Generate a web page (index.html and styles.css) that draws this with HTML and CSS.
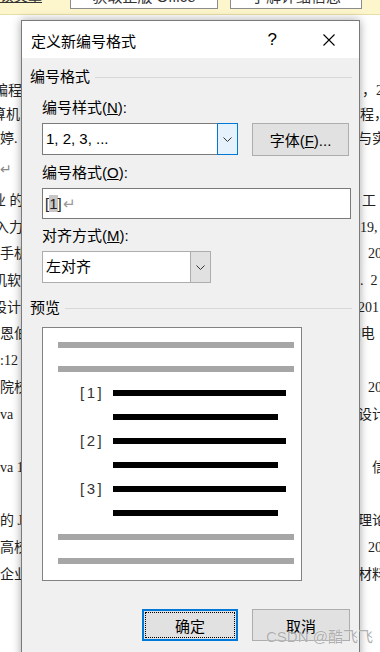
FILE: index.html
```html
<!DOCTYPE html>
<html lang="zh-CN">
<head>
    <meta charset="UTF-8">
    <meta name="viewport" content="width=device-width, initial-scale=1.0">
    <title>定义新编号格式</title>
    <link rel="stylesheet" href="styles.css">
</head>
<body>
    <!-- 顶部提示栏（被截断） -->
    <div class="msgbar">
        <span class="msg-link">阅读文章</span>
        <span class="msg-btn btn-office">获取正版 Office</span>
        <span class="msg-btn btn-info">了解详细信息</span>
    </div>

    <!-- 对话框后面的文档 -->
    <div class="doc">
        <div class="line"><span class="l m6">编程</span><span class="r r4">，2</span></div>
        <div class="line"><span class="l m8">算机</span><span class="r r2">程，</span></div>
        <div class="line"><span class="l">婷.</span><span class="r">与实</span></div>
        <div class="line tall"><span class="l arrow">↵</span><span class="r"></span></div>
        <div class="line wide"><span class="l m8">业 的</span><span class="r r4">工</span></div>
        <div class="line wide"><span class="l m5">入力</span><span class="r r2">19,</span></div>
        <div class="line wide"><span class="l">手机</span><span class="r r10">20</span></div>
        <div class="line wide"><span class="l m7">机软</span><span class="r r2">.&nbsp; 2</span></div>
        <div class="line wide"><span class="l m7">设计</span><span class="r">201</span></div>
        <div class="line wide"><span class="l">恩伯</span><span class="r">|电</span></div>
        <div class="line wide"><span class="l">:12</span><span class="r"></span></div>
        <div class="line wide"><span class="l">院校</span><span class="r r10">20</span></div>
        <div class="line wide"><span class="l">va</span><span class="r">设计</span></div>
        <div class="line wide"><span class="l"></span><span class="r"></span></div>
        <div class="line wide"><span class="l">va 1</span><span class="r r14">信</span></div>
        <div class="line wide"><span class="l"></span><span class="r"></span></div>
        <div class="line wide"><span class="l">的 J</span><span class="r">理论</span></div>
        <div class="line wide"><span class="l">高校</span><span class="r r10">20</span></div>
        <div class="line wide"><span class="l">企业</span><span class="r">材料</span></div>
    </div>

    <div class="dialog">
        <div class="titlebar">
            <span class="title">定义新编号格式</span>
            <span class="help">?</span>
            <svg class="close" width="12" height="12" viewBox="0 0 12 12">
                <path d="M0.5 0.5L11.5 11.5M11.5 0.5L0.5 11.5" stroke="#000" stroke-width="1.1" fill="none"/>
            </svg>
        </div>

        <div class="dlg-body">
            <div class="group-head"><span>编号格式</span><i class="rule"></i></div>

            <div class="label first">编号样式(<u>N</u>):</div>
            <div class="row">
                <div class="combo">
                    <span class="combo-text">1, 2, 3, ...</span>
                    <span class="drop focus">
                        <svg width="9" height="5" viewBox="0 0 9 5"><path d="M0.5 0.5L4.5 4.5L8.5 0.5" stroke="#333" fill="none"/></svg>
                    </span>
                </div>
                <button class="btn btn-font">字体(<u>F</u>)...</button>
            </div>

            <div class="label">编号格式(<u>O</u>):</div>
            <div class="textbox">[<span class="sel">1</span>]<span class="para">↵</span></div>

            <div class="label">对齐方式(<u>M</u>):</div>
            <div class="combo combo-align">
                <span class="combo-text">左对齐</span>
                <span class="drop">
                    <svg width="9" height="5" viewBox="0 0 9 5"><path d="M0.5 0.5L4.5 4.5L8.5 0.5" stroke="#333" fill="none"/></svg>
                </span>
            </div>

            <div class="group-head preview-head"><span>预览</span><i class="rule"></i></div>

            <div class="preview">
                <div class="bar gray"></div>
                <div class="bar gray"></div>
                <div class="num-row"><span class="num">[1]</span><i class="bar black"></i></div>
                <div class="num-row"><span class="num"></span><i class="bar black short"></i></div>
                <div class="num-row"><span class="num">[2]</span><i class="bar black"></i></div>
                <div class="num-row"><span class="num"></span><i class="bar black short"></i></div>
                <div class="num-row"><span class="num">[3]</span><i class="bar black"></i></div>
                <div class="num-row"><span class="num"></span><i class="bar black short"></i></div>
                <div class="bar gray"></div>
                <div class="bar gray"></div>
            </div>

            <div class="actions">
                <button class="btn btn-ok">确定</button>
                <button class="btn btn-cancel">取消</button>
            </div>
        </div>
    </div>

    <div class="watermark">CSDN @酷飞飞</div>
</body>
</html>
```

FILE: styles.css
```css
* {
    box-sizing: border-box;
}
body {
    margin: 0;
    width: 380px;
    height: 652px;
    overflow: hidden;
    position: relative;
    background: #fff;
    color: #000;
    font-family: "Liberation Sans", "Noto Sans CJK SC", sans-serif;
}

/* 提示栏 */
.msgbar {
    height: 15px;
    background: #fdf5cb;
    border-bottom: 1px solid #e9dea6;
    display: flex;
    align-items: flex-start;
    overflow: hidden;
}
.msg-link {
    width: 45px;
    margin-top: -12px;
    font-size: 14px;
    line-height: 16px;
    text-indent: -14px;
    text-decoration: underline;
    color: #333;
    white-space: nowrap;
    overflow: hidden;
}
.msg-btn {
    margin-top: -19px;
    height: 28px;
    border: 1px solid #8c8c8c;
    background: #fff;
    font-size: 15px;
    line-height: 30px;
    text-align: center;
    white-space: nowrap;
    color: #333;
}
.btn-office {
    margin-left: 25px;
    width: 148px;
}
.btn-info {
    margin-left: 12px;
    width: 132px;
}

/* 文档 */
.doc {
    padding-top: 64px;
    font-family: "Liberation Serif", "Noto Sans CJK SC", serif;
    font-size: 14px;
    color: #222;
}
.line {
    display: flex;
    justify-content: space-between;
    height: 24px;
    line-height: 24px;
    white-space: nowrap;
}
.line.tall {
    height: 37px;
    line-height: 37px;
}
.line.wide {
    height: 26.7px;
    line-height: 26.7px;
}
.l.m5 { margin-left: -5px; }
.l.m6 { margin-left: -6px; }
.l.m7 { margin-left: -7px; }
.l.m8 { margin-left: -8px; }
.arrow {
    color: #888;
}
.r {
    width: 22px;
    overflow: visible;
}
.r2 { padding-left: 2px; }
.r4 { padding-left: 4px; }
.r10 { padding-left: 10px; }
.r14 { padding-left: 14px; }

/* 对话框 */
.dialog {
    position: absolute;
    left: 21px;
    top: 20px;
    width: 339px;
    height: 650px;
    background: #f0f0f0;
    border: 1px solid #7a7a7a;
    box-shadow: 0 0 9px rgba(0, 0, 0, 0.35);
}
.titlebar {
    height: 37px;
    background: #fff;
    display: flex;
    align-items: center;
    padding: 1px 24px 0 9px;
}
.title {
    flex: 1;
    font-size: 15px;
}
.help {
    font-size: 17px;
    margin-right: 46px;
}
.dlg-body {
    padding: 9px 7px 0 8px;
    font-size: 15px;
}
.group-head {
    display: flex;
    align-items: center;
    gap: 5px;
    height: 20px;
    line-height: 20px;
}
.rule {
    flex: 1;
    height: 1px;
    background: #d8d8d8;
}
.label {
    margin: 7px 0 5px 12px;
    height: 20px;
    line-height: 20px;
}
.label.first {
    margin-top: 11px;
}
.row {
    display: flex;
    margin-left: 12px;
}
.combo {
    display: flex;
    width: 196px;
    height: 32px;
}
.combo-text {
    flex: 1;
    background: #fff;
    border: 1px solid #7a7a7a;
    border-right: none;
    padding-left: 3px;
    line-height: 30px;
}
.drop {
    width: 21px;
    display: flex;
    align-items: center;
    justify-content: center;
    background: #e1e1e1;
    border: 1px solid #adadad;
}
.drop.focus {
    background: #e5f1fb;
    border-color: #0078d7;
}
.combo-align {
    width: 169px;
    margin-left: 12px;
}
.combo-align .combo-text {
    border-color: #adadad;
}
.btn {
    font-family: "Liberation Sans", "Noto Sans CJK SC", sans-serif;
    font-size: 15px;
    color: #000;
    background: #e1e1e1;
    border: 1px solid #adadad;
    padding: 0;
    height: 32px;
}
.btn-font {
    margin-left: 14px;
    width: 97px;
    height: 33px;
}
.textbox {
    margin-left: 12px;
    width: 309px;
    height: 31px;
    background: #fff;
    border: 1px solid #7a7a7a;
    padding-left: 2px;
    line-height: 29px;
    font-size: 15px;
    color: #222;
}
.sel {
    background: #c6c6c6;
}
.para {
    color: #999;
    margin-left: 1px;
}
.preview-head {
    margin-top: 15px;
}
.preview {
    margin: 9px 0 0 12px;
    width: 260px;
    height: 254px;
    background: #fff;
    border: 1px solid #828282;
    padding: 14px 7px 0 15px;
    display: flex;
    flex-direction: column;
    gap: 18px;
}
.bar {
    display: block;
    height: 6px;
}
.bar.gray {
    background: #a6a6a6;
}
.num-row {
    display: flex;
    align-items: center;
    height: 6px;
}
.num {
    width: 55px;
    padding-left: 22px;
    font-size: 15px;
    line-height: 6px;
    letter-spacing: 2.5px;
    color: #333;
}
.bar.black {
    flex: 1;
    background: #000;
    margin-right: 8px;
}
.bar.black.short {
    margin-right: 16px;
}
.actions {
    display: flex;
    justify-content: flex-end;
    gap: 14px;
    margin: 28px 2px 0 0;
}
.btn-ok {
    position: relative;
    width: 96px;
    border: 2px solid #0078d7;
}
.btn-ok::after {
    content: "";
    position: absolute;
    left: 1px;
    top: 1px;
    right: 1px;
    bottom: 1px;
    border: 1px dotted #000;
}
.btn-cancel {
    width: 98px;
}

.watermark {
    position: absolute;
    left: 266px;
    top: 625px;
    font-size: 15px;
    color: rgba(140, 140, 140, 0.7);
    text-shadow: 0 0 1px #fff;
    white-space: nowrap;
}
```
